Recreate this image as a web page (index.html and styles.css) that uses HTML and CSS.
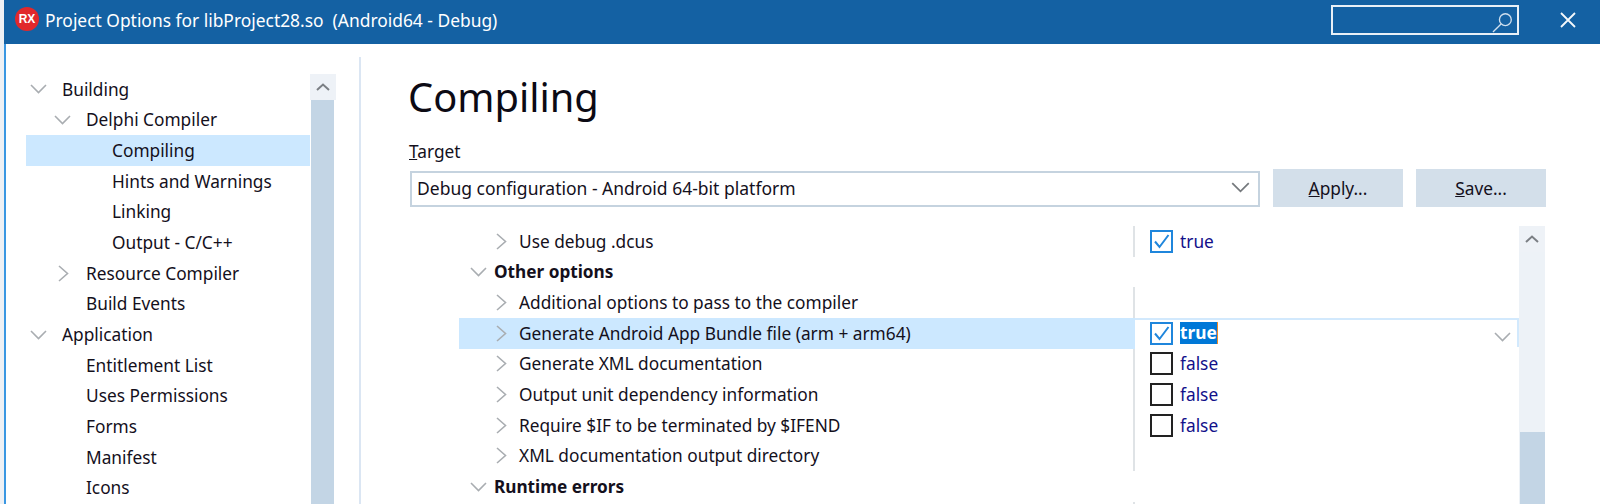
FILE: index.html
```html
<!DOCTYPE html>
<html lang="en">
<head>
<meta charset="utf-8">
<title>Project Options</title>
<link rel="stylesheet" href="styles.css">
</head>
<body>
<svg class="defs" width="0" height="0" aria-hidden="true">
  <defs>
    <symbol id="chev-down" viewBox="0 0 17 10"><path d="M1 1l7.5 7.5L16 1" fill="none" stroke="currentColor" stroke-width="1.6"/></symbol>
    <symbol id="chev-right" viewBox="0 0 11 17"><path d="M1 1l8.5 7.5L1 16" fill="none" stroke="currentColor" stroke-width="1.6"/></symbol>
    <symbol id="chev-up" viewBox="0 0 14 8"><path d="M1 7l6-5.5L13 7" fill="none" stroke="currentColor" stroke-width="2"/></symbol>
    <symbol id="check" viewBox="0 0 19 19"><path d="M3 9.5l4.5 5.5L16.5 3" fill="none" stroke="currentColor" stroke-width="2"/></symbol>
  </defs>
</svg>
<div class="window">
  <header class="titlebar">
    <span class="logo">RX</span>
    <span class="title">Project Options for libProject28.so&nbsp; (Android64 - Debug)</span>
    <div class="search">
      <svg class="search-icon" viewBox="0 0 22 22"><circle cx="14" cy="8" r="6.2" fill="none" stroke="currentColor" stroke-width="1.4"/><path d="M9.5 12.5L1 21" fill="none" stroke="currentColor" stroke-width="1.4"/></svg>
    </div>
    <svg class="close" viewBox="0 0 16 16"><path d="M1 1l14 14M15 1L1 15" fill="none" stroke="currentColor" stroke-width="1.8"/></svg>
  </header>
  <div class="content">
    <aside class="sidebar">
      <ul class="tree">
        <li class="node l0"><svg class="tw-down"><use href="#chev-down"/></svg><span>Building</span></li>
        <li class="node l1"><svg class="tw-down"><use href="#chev-down"/></svg><span>Delphi Compiler</span></li>
        <li class="node l2 selected"><span>Compiling</span></li>
        <li class="node l2"><span>Hints and Warnings</span></li>
        <li class="node l2"><span>Linking</span></li>
        <li class="node l2"><span>Output - C/C++</span></li>
        <li class="node l1"><svg class="tw-right"><use href="#chev-right"/></svg><span>Resource Compiler</span></li>
        <li class="node l1 leaf"><span>Build Events</span></li>
        <li class="node l0"><svg class="tw-down"><use href="#chev-down"/></svg><span>Application</span></li>
        <li class="node l1 leaf"><span>Entitlement List</span></li>
        <li class="node l1 leaf"><span>Uses Permissions</span></li>
        <li class="node l1 leaf"><span>Forms</span></li>
        <li class="node l1 leaf"><span>Manifest</span></li>
        <li class="node l1 leaf"><span>Icons</span></li>
      </ul>
      <div class="scrollbar tree-scroll">
        <div class="sb-btn"><svg class="sb-up"><use href="#chev-up"/></svg></div>
        <div class="sb-thumb"></div>
      </div>
    </aside>
    <div class="divider"></div>
    <main class="main">
      <h1>Compiling</h1>
      <label class="target-label"><u>T</u>arget</label>
      <div class="target-row">
        <div class="combo"><span>Debug configuration - Android 64-bit platform</span><svg class="combo-chev"><use href="#chev-down"/></svg></div>
        <button class="btn"><u>A</u>pply...</button>
        <button class="btn"><u>S</u>ave...</button>
      </div>
      <div class="grid-wrap">
        <div class="grid">
          <div class="row"><div class="name"><svg class="exp"><use href="#chev-right"/></svg>Use debug .dcus</div><div class="val"><span class="cb on"><svg><use href="#check"/></svg></span><span class="v">true</span></div></div>
          <div class="row group"><div class="name"><svg class="col"><use href="#chev-down"/></svg>Other options</div></div>
          <div class="row"><div class="name"><svg class="exp"><use href="#chev-right"/></svg>Additional options to pass to the compiler</div><div class="val"></div></div>
          <div class="row active"><div class="name"><svg class="exp"><use href="#chev-right"/></svg>Generate Android App Bundle file (arm + arm64)</div><div class="val"><span class="cb on"><svg><use href="#check"/></svg></span><span class="v sel">true</span><svg class="val-chev"><use href="#chev-down"/></svg></div></div>
          <div class="row"><div class="name"><svg class="exp"><use href="#chev-right"/></svg>Generate XML documentation</div><div class="val"><span class="cb"></span><span class="v">false</span></div></div>
          <div class="row"><div class="name"><svg class="exp"><use href="#chev-right"/></svg>Output unit dependency information</div><div class="val"><span class="cb"></span><span class="v">false</span></div></div>
          <div class="row"><div class="name"><svg class="exp"><use href="#chev-right"/></svg>Require $IF to be terminated by $IFEND</div><div class="val"><span class="cb"></span><span class="v">false</span></div></div>
          <div class="row"><div class="name"><svg class="exp"><use href="#chev-right"/></svg>XML documentation output directory</div><div class="val"></div></div>
          <div class="row group"><div class="name"><svg class="col"><use href="#chev-down"/></svg>Runtime errors</div></div>
          <div class="row"><div class="name"></div><div class="val"></div></div>
        </div>
        <div class="scrollbar grid-scroll">
          <div class="sb-btn"><svg class="sb-up"><use href="#chev-up"/></svg></div>
          <div class="sb-track"></div>
          <div class="sb-thumb"></div>
        </div>
      </div>
    </main>
  </div>
</div>
</body>
</html>
```
FILE: styles.css
```css
* { box-sizing: border-box; }
html, body { margin: 0; height: 504px; overflow: hidden; }
body {
  background: #eef1f5;
  font-family: "Noto Sans", "Open Sans", sans-serif;
  font-size: 17.3px;
  color: #14101c;
}
.defs { position: absolute; }
.window { margin-left: 4px; height: 504px; display: flex; flex-direction: column; overflow: hidden; }

.titlebar {
  height: 44px;
  flex: none;
  background: #1461a3;
  color: #fff;
  display: flex;
  align-items: center;
  padding-left: 11px;
}
.logo {
  width: 24px; height: 24px;
  border-radius: 50%;
  background: #e1282c;
  color: #fff;
  font: bold 12px/24px "Liberation Sans", sans-serif;
  text-align: center;
  margin-top: -7px;
  flex: none;
}
.title { margin-left: 6px; margin-top: -4px; font-size: 17.4px; white-space: nowrap; flex: 1; }
.search {
  width: 188px; height: 30px;
  border: 2px solid #e9f0f7;
  margin-top: -4px;
  position: relative;
}
.search-icon { position: absolute; right: 4px; top: 5px; width: 21px; height: 21px; color: #cfdfee; }
.close { width: 16px; height: 16px; margin-left: 41px; margin-right: 24px; margin-top: -4px; color: #f4f8fb; flex: none; }

.content { flex: 1; display: flex; min-height: 0; background: #fff; border-left: 2px solid #3a97e2; }

.sidebar { display: flex; padding: 30px 0 0 20px; flex: none; }
.tree { list-style: none; margin: 0; padding: 0; width: 284px; }
.node { height: 30.67px; display: flex; align-items: center; color: #14101c; white-space: nowrap; padding-left: 4px; }
.node svg { flex: none; color: #a9adb1; }
.tw-down { width: 17px; height: 10px; margin-right: 15px; }
.tw-right { width: 11px; height: 17px; margin-left: 4px; margin-right: 17px; }
.l1 { padding-left: 28px; }
.l1.leaf { padding-left: 60px; }
.l2 { padding-left: 86px; }
.selected { background: #cce8ff; }

.scrollbar { display: flex; flex-direction: column; width: 26px; flex: none; }
.sb-btn { height: 26px; flex: none; background: #eef2f7; display: flex; align-items: center; justify-content: center; }
.sb-up { width: 14px; height: 8px; color: #7b7f84; }
.sb-thumb { flex: 1; background: #c3d5e5; margin: 0 2px 0 1px; }

.divider { width: 2px; flex: none; margin: 13px 0 0 23px; background: #dbe6f3; }

.main { flex: 1; min-width: 0; padding-left: 48px; display: flex; flex-direction: column; }
h1 { margin: 26px 0 0 -1px; font-size: 39.8px; font-weight: 400; line-height: 54px; color: #0c0a14; }
.target-label { margin-top: 17px; line-height: 22px; display: block; }
.target-row { display: flex; align-items: flex-start; margin: 6px 0 0 1px; }
.combo {
  width: 850px; height: 36px;
  border: 2px solid #c5d3df;
  display: flex; align-items: center; justify-content: space-between;
  padding: 0 8px 3px 5px;
  margin-top: 2px;
  font-size: 17.5px;
}
.combo-chev { width: 19px; height: 11px; color: #75797d; }
.btn {
  width: 130px; height: 38px;
  margin-left: 13px;
  border: 0;
  background: #d3dfea;
  font: inherit;
  color: inherit;
  padding: 0;
}

.grid-wrap { display: flex; margin-top: 19px; margin-left: 50px; flex: 1; min-height: 0; }
.grid { width: 1060px; flex: none; }
.row { height: 30.67px; display: flex; }
.name { width: 674px; flex: none; display: flex; align-items: center; padding-left: 37px; white-space: nowrap; }
.group .name { font-weight: 700; padding-left: 11px; font-size: 17.2px; }
.exp { width: 11px; height: 17px; color: #a9adb1; margin-right: 12px; flex: none; }
.col { width: 17px; height: 10px; color: #a9adb1; margin-right: 7px; flex: none; }
.val { flex: 1; border-left: 2px solid #dfe3e6; display: flex; align-items: center; padding-left: 15px; position: relative; }
.cb { width: 23px; height: 23px; border: 2px solid #222; flex: none; margin-right: 7px; display: flex; align-items: center; justify-content: center; }
.cb svg { width: 19px; height: 19px; color: #1f86dc; }
.cb.on { border-color: #1f86dc; }
.v { color: #12108a; }
.row.active .name { background: #cce8ff; width: 676px; }
.row.active .val { border-left: 0; border-top: 2px solid #d2e9fd; border-right: 2px solid #d2e9fd; height: 29px; }
.sel { background: #0078d7; color: #fff; font-weight: 700; border-right: 1px solid #f08a24; line-height: 22px; }
.val-chev { width: 17px; height: 10px; color: #a9adb1; position: absolute; right: 6px; top: 12px; }

.grid-scroll { background: #edf2f7; }
.sb-track { height: 180px; flex: none; }
.grid-scroll .sb-thumb { margin: 0 0 0 1px; }
```
